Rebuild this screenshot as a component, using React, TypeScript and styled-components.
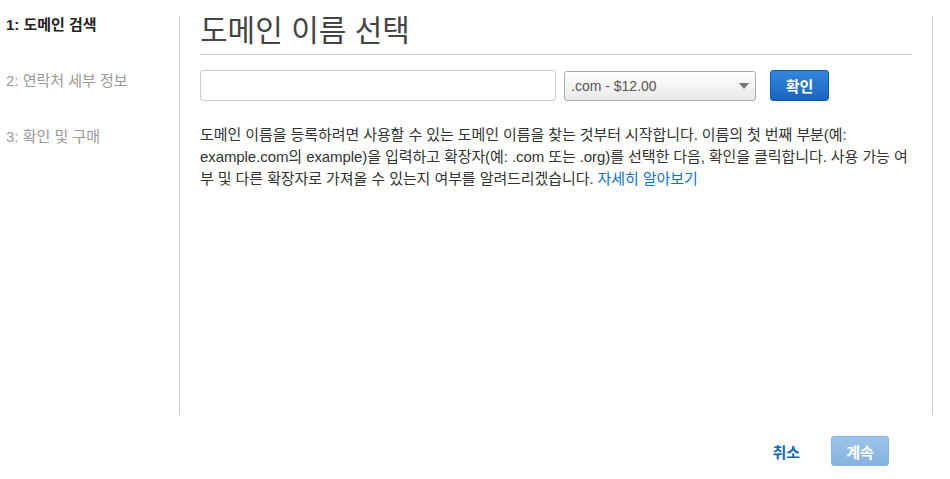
import React from 'react';
import styled, { createGlobalStyle } from 'styled-components';

const GlobalStyle = createGlobalStyle`
  html, body {
    margin: 0;
    padding: 0;
    background: #ffffff;
  }
  body {
    font-family: "Liberation Sans", "Noto Sans CJK KR", Arial, sans-serif;
    font-size: 14px;
    color: #333333;
  }
`;

const Page = styled.div`
  width: 950px;
  height: 479px;
  display: flex;
  flex-direction: column;
`;

const Body = styled.div`
  display: flex;
  padding-top: 16px;
  height: 399px;
`;

const Sidebar = styled.nav`
  width: 179px;
  border-right: 1px solid #cccccc;
  display: flex;
  flex-direction: column;
  gap: 38px;
`;

const Step = styled.div<{ $active?: boolean }>`
  padding-left: 6px;
  line-height: 18px;
  font-size: 15px;
  font-weight: ${(p) => (p.$active ? 700 : 400)};
  color: ${(p) => (p.$active ? '#222222' : '#999999')};
`;

const Main = styled.main`
  width: 712px;
  padding: 0 20px;
  border-right: 1px solid #cccccc;
`;

const Heading = styled.h1`
  margin: 0;
  padding-bottom: 8px;
  border-bottom: 1px solid #cccccc;
  font-size: 30px;
  line-height: 30px;
  font-weight: 400;
  color: #444444;
`;

const SearchRow = styled.div`
  display: flex;
  align-items: center;
  margin-top: 15px;
  height: 31px;
`;

const DomainInput = styled.input`
  box-sizing: border-box;
  width: 356px;
  height: 31px;
  border: 1px solid #cccccc;
  border-radius: 3px;
  padding: 0 8px;
  font: inherit;
  outline: none;
`;

const SelectBox = styled.div`
  box-sizing: border-box;
  position: relative;
  margin-left: 8px;
  width: 192px;
  height: 30px;
  border: 1px solid #aaaaaa;
  border-radius: 3px;
  background: linear-gradient(#ffffff 0%, #f4f4f4 50%, #e8e8e8 100%);
  display: flex;
  align-items: center;
  padding-left: 6px;
  color: #555555;
  font-size: 14px;
`;

const Caret = styled.span`
  position: absolute;
  right: 6px;
  top: 11px;
  width: 0;
  height: 0;
  border-left: 5px solid transparent;
  border-right: 5px solid transparent;
  border-top: 6px solid #777777;
`;

const PrimaryButton = styled.button<{ $disabled?: boolean }>`
  box-sizing: border-box;
  height: 31px;
  padding: 0;
  border-radius: 3px;
  border: 1px solid ${(p) => (p.$disabled ? '#8ab4e0' : '#1859a8')};
  background: ${(p) =>
    p.$disabled
      ? 'linear-gradient(#9cc4ec, #88b2e0)'
      : 'linear-gradient(#3486dc, #1764c0)'};
  color: #ffffff;
  font: inherit;
  font-weight: 700;
  font-size: 15px;
  cursor: pointer;
`;

const ConfirmButton = styled(PrimaryButton)`
  margin-left: 14px;
  width: 59px;
`;

const Description = styled.p`
  margin: 23px 0 0;
  line-height: 22px;
  font-size: 15px;
  letter-spacing: -0.08px;
  color: #333333;
`;

const Link = styled.a`
  color: #0f73c3;
  text-decoration: none;
  cursor: pointer;
`;

const Footer = styled.footer`
  display: flex;
  justify-content: flex-end;
  align-items: center;
  gap: 31px;
  padding: 21px 61px 0 0;
`;

const CancelLink = styled.a`
  color: #1666b8;
  font-weight: 700;
  font-size: 15px;
  cursor: pointer;
`;

const ContinueButton = styled(PrimaryButton)`
  width: 58px;
  height: 30px;
`;

export default function App() {
  return (
    <Page>
      <GlobalStyle />
      <Body>
        <Sidebar>
          <Step $active>1: 도메인 검색</Step>
          <Step>2: 연락처 세부 정보</Step>
          <Step>3: 확인 및 구매</Step>
        </Sidebar>
        <Main>
          <Heading>도메인 이름 선택</Heading>
          <SearchRow>
            <DomainInput type="text" />
            <SelectBox>
              .com - $12.00
              <Caret />
            </SelectBox>
            <ConfirmButton>확인</ConfirmButton>
          </SearchRow>
          <Description>
            도메인 이름을 등록하려면 사용할 수 있는 도메인 이름을 찾는 것부터 시작합니다. 이름의 첫 번째
            부분(예: example.com의 example)을 입력하고 확장자(예: .com 또는 .org)를 선택한 다음, 확인을
            클릭합니다. 사용 가능 여부 및 다른 확장자로 가져올 수 있는지 여부를 알려드리겠습니다.{' '}
            <Link>자세히 알아보기</Link>
          </Description>
        </Main>
      </Body>
      <Footer>
        <CancelLink>취소</CancelLink>
        <ContinueButton $disabled>계속</ContinueButton>
      </Footer>
    </Page>
  );
}
